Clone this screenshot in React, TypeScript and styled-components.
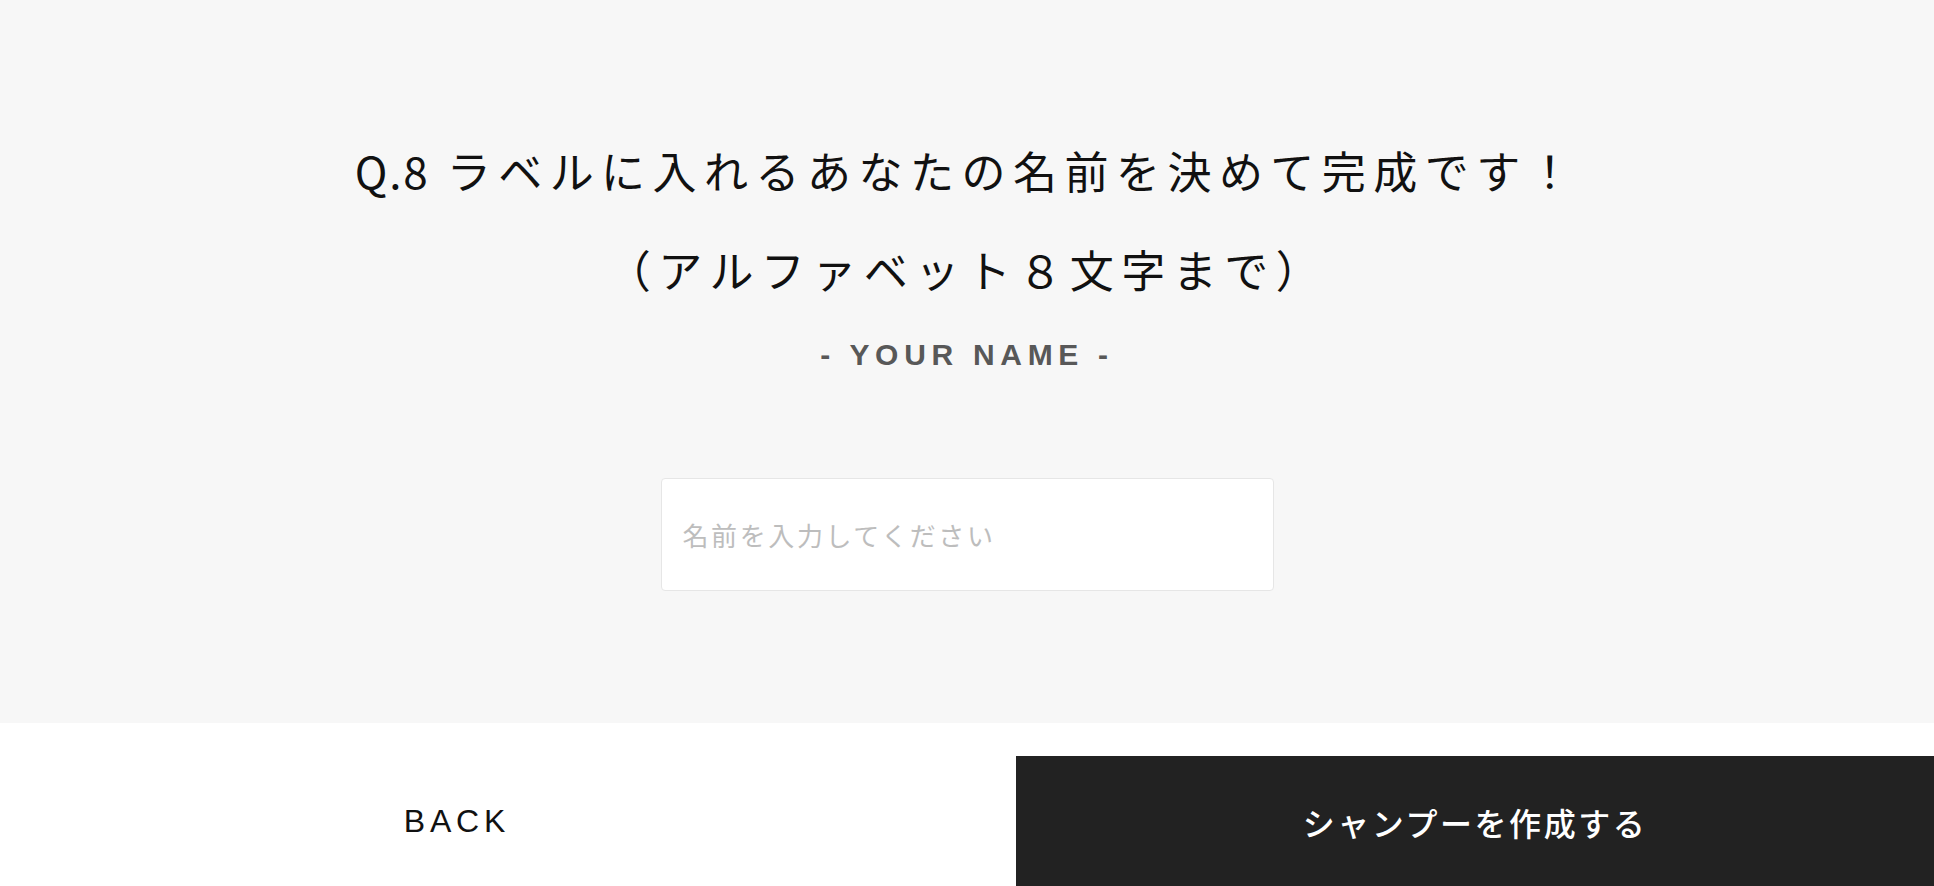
import React from "react";
import styled, { createGlobalStyle } from "styled-components";

const GlobalStyle = createGlobalStyle`
  html, body {
    margin: 0;
    padding: 0;
    background: #ffffff;
  }
  body {
    font-family: "Noto Sans CJK JP", "Noto Sans", sans-serif;
    color: #111111;
  }
  * { box-sizing: border-box; }
`;

const Page = styled.div`
  width: 100%;
  min-height: 886px;
  display: flex;
  flex-direction: column;
  background: #ffffff;
`;

const QuestionSection = styled.section`
  background: #f7f7f7;
  padding: 121px 0 132px;
  display: flex;
  flex-direction: column;
  align-items: center;
`;

const Title = styled.h2`
  margin: 0;
  font-family: "Noto Sans CJK JP", sans-serif;
  font-weight: 400;
  font-size: 44px;
  line-height: 99px;
  letter-spacing: 0.17em;
  text-align: center;
  color: #111111;
`;

const Latin = styled.span`
  letter-spacing: 0.04em;
`;

const Subtitle = styled.p`
  margin: 16px 0 0;
  font-family: "Liberation Sans", Arial, sans-serif;
  font-weight: 700;
  font-size: 30px;
  line-height: 40px;
  letter-spacing: 0.19em;
  color: #585858;
  text-align: center;
`;

const NameInput = styled.input`
  margin-top: 103px;
  width: 613px;
  height: 113px;
  padding: 0 21px;
  background: #ffffff;
  border: 1px solid #e6e6e6;
  border-radius: 4px;
  font-family: "Noto Sans CJK JP", sans-serif;
  font-size: 26px;
  letter-spacing: 0.1em;
  color: #222222;
  outline: none;

  &::placeholder {
    color: #bdbdbd;
  }
`;

const Footer = styled.footer`
  display: flex;
  justify-content: space-between;
  align-items: stretch;
  padding-top: 33px;
`;

const FooterButton = styled.button<{ $primary?: boolean; $width: string }>`
  width: ${(p) => p.$width};
  height: 131px;
  border: none;
  border-radius: 0;
  margin: 0;
  display: flex;
  align-items: center;
  justify-content: center;
  cursor: pointer;
  background: ${(p) => (p.$primary ? "#222222" : "transparent")};
  color: ${(p) => (p.$primary ? "#ffffff" : "#111111")};
  font-family: ${(p) =>
    p.$primary
      ? '"Noto Sans CJK JP", sans-serif'
      : '"Liberation Sans", Arial, sans-serif'};
  font-size: 32px;
  font-weight: ${(p) => (p.$primary ? 500 : 400)};
  letter-spacing: ${(p) => (p.$primary ? "0.08em" : "0.15em")};
`;

export default function App() {
  return (
    <Page>
      <GlobalStyle />
      <QuestionSection>
        <Title>
          <Latin>Q.8</Latin> ラベルに入れるあなたの名前を決めて完成です！
          <br />
          （アルファベット８文字まで）
        </Title>
        <Subtitle>- YOUR NAME -</Subtitle>
        <NameInput type="text" placeholder="名前を入力してください" />
      </QuestionSection>
      <Footer>
        <FooterButton $width="914px">BACK</FooterButton>
        <FooterButton $width="918px" $primary>
          シャンプーを作成する
        </FooterButton>
      </Footer>
    </Page>
  );
}
